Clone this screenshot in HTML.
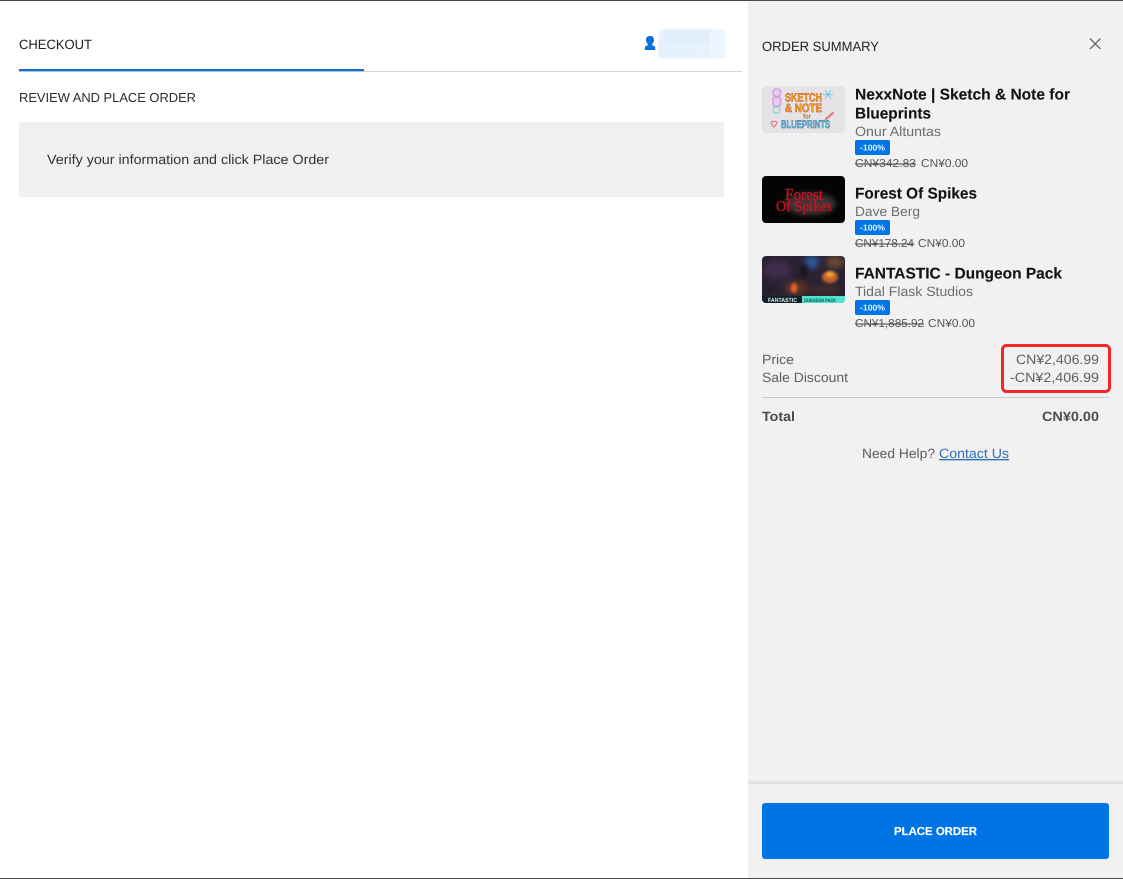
<!DOCTYPE html>
<html lang="en">
<head>
<meta charset="utf-8">
<title>Checkout</title>
<style>
html,body{margin:0;padding:0;background:#fff;width:1123px;height:879px;overflow:hidden}
svg{display:block}
text{font-family:"Liberation Sans",sans-serif;text-rendering:geometricPrecision}
.t{font-size:15.500px;font-weight:700;fill:#121212;stroke:#121212;stroke-width:.12px}
.s{font-size:13.500px;fill:#6c6c6c}
.p{font-size:11.500px;fill:#555}
.l{font-size:13.500px;fill:#5e5e5e}
.b{font-size:8.500px;font-weight:700;fill:#eaf4ff}
</style>
</head>
<body>
<svg xmlns="http://www.w3.org/2000/svg" width="1123" height="879" viewBox="0 0 1123 879">
<defs>
<filter id="b1" x="-30%" y="-30%" width="160%" height="160%"><feGaussianBlur stdDeviation="1.300"/></filter>
<filter id="b2" x="-30%" y="-30%" width="160%" height="160%"><feGaussianBlur stdDeviation="3"/></filter>
<filter id="b4" x="-10%" y="-10%" width="120%" height="120%"><feGaussianBlur stdDeviation=".35"/></filter>
<filter id="b5" x="-10%" y="-20%" width="120%" height="140%"><feGaussianBlur stdDeviation=".8"/></filter>
<clipPath id="c1"><rect x="762" y="86" width="83" height="47" rx="4"/></clipPath>
<clipPath id="c2"><rect x="762" y="176" width="83" height="47" rx="4"/></clipPath>
<clipPath id="c3"><rect x="762" y="256" width="83" height="47" rx="4"/></clipPath>
<linearGradient id="sh" x1="0" y1="0" x2="0" y2="1"><stop offset="0" stop-color="#f1f1f1"/><stop offset="1" stop-color="#dcdcdc"/></linearGradient>
</defs>

<rect width="1123" height="879" fill="#fff"/>
<rect x="748" y="0" width="375" height="879" fill="#f1f1f1"/>

<rect x="0" y="0" width="1123" height="1" fill="#4a4a4a"/>
<rect x="0" y="878" width="1123" height="1" fill="#4a4a4a"/>

<!-- left header -->
<text x="19" y="49" font-size="13.500" fill="#202020" textLength="73" lengthAdjust="spacingAndGlyphs">CHECKOUT</text>
<rect x="364" y="71" width="378" height="1" fill="#d6d6d6"/>
<rect x="19" y="69" width="345" height="2.400" fill="#1a70c8"/>
<text x="19" y="102" font-size="13" fill="#2a2a2a" textLength="177" lengthAdjust="spacingAndGlyphs">REVIEW AND PLACE ORDER</text>

<rect x="19" y="122" width="705" height="75" fill="#f0f0f0"/>
<text x="47" y="164" font-size="13.500" fill="#333" textLength="282" lengthAdjust="spacingAndGlyphs">Verify your information and click Place Order</text>

<!-- user icon + redaction -->
<path d="M650.500 36c2.200 0 3.500 1.700 3.500 3.900 0 1.800-.8 3.100-1.700 4v1.500c1.100.4 2.300.8 2.900 1.600v3h-10.400v-3c.6-.8 1.800-1.200 2.900-1.600v-1.500c-.9-.9-1.700-2.200-1.700-4 0-2.200 1.300-3.900 3.700-3.900z" fill="#0a6fdc"/>
<g filter="url(#b5)">
<rect x="658" y="29" width="68" height="30" rx="8" fill="#e8f2fd"/>
<rect x="664" y="30" width="46" height="13" fill="#e0eefc"/>
<rect x="659" y="43" width="36" height="15" fill="#e5f1fc"/>
<rect x="710" y="30" width="16" height="29" fill="#edf6fe"/>
</g>

<!-- summary header -->
<text x="762" y="51" font-size="13.500" fill="#222" textLength="117" lengthAdjust="spacingAndGlyphs">ORDER SUMMARY</text>
<path d="M1090 38.500l10.500 10.500M1100.500 38.500l-10.500 10.500" stroke="#555" stroke-width="1.200" fill="none"/>

<!-- thumb 1 -->
<g clip-path="url(#c1)">
<rect x="762" y="86" width="83" height="47" fill="#e5e3e5"/>
<g filter="url(#b4)">
<rect x="773" y="89" width="7.500" height="7.500" rx="3" fill="#ecc9f0" stroke="#d39fe0" stroke-width="1.500"/>
<rect x="773" y="97" width="7.500" height="9" rx="2" fill="#ecc9f0" stroke="#d39fe0" stroke-width="1.500"/>
<rect x="773.500" y="107" width="6" height="6" rx="1" fill="none" stroke="#7fd8dc" stroke-width="1.300"/>
<text x="785" y="101.500" font-size="12" font-weight="700" fill="#f0a92f" stroke="#c4562b" stroke-width=".5" textLength="37" lengthAdjust="spacingAndGlyphs">SKETCH</text>
<text x="785" y="112" font-size="12" font-weight="700" fill="#f0a92f" stroke="#c4562b" stroke-width=".5" textLength="37" lengthAdjust="spacingAndGlyphs">&amp; NOTE</text>
<text x="803" y="118.500" font-size="7" font-weight="700" fill="#c8702c" textLength="8" lengthAdjust="spacingAndGlyphs">for</text>
<text x="781" y="128" font-size="11" font-weight="700" fill="#7cc8e2" stroke="#2c6f9a" stroke-width=".5" textLength="49" lengthAdjust="spacingAndGlyphs">BLUEPRINTS</text>
<circle cx="828" cy="94.500" r="1.600" fill="#5cc6e6"/>
<path d="M823 94.500h10M825 90l6 9M831 90l-6 9" stroke="#72cfe9" stroke-width="1"/>
<path d="M826 119l7-6" stroke="#e37f83" stroke-width="2.400" stroke-linecap="round"/>
<path d="M774 127l-2.500-3c-1.500-2 1-4 2.500-2 1.500-2 4 0 2.500 2z" fill="none" stroke="#e77b86" stroke-width="1.200"/>
</g>
</g>

<!-- thumb 2 -->
<g clip-path="url(#c2)">
<rect x="762" y="176" width="83" height="47" fill="#040404"/>
<ellipse cx="810" cy="204" rx="26" ry="11" fill="#3c3636" filter="url(#b2)"/>
<g filter="url(#b4)">
<text x="785" y="200" font-size="17" fill="#d01020" stroke="#d01020" stroke-width=".3" textLength="38" lengthAdjust="spacingAndGlyphs" style="font-family:'Liberation Serif',serif">Forest</text>
<text x="776" y="211" font-size="15" fill="#d01020" stroke="#d01020" stroke-width=".3" textLength="56" lengthAdjust="spacingAndGlyphs" style="font-family:'Liberation Serif',serif">Of Spikes</text>
</g>
</g>

<!-- thumb 3 -->
<g clip-path="url(#c3)">
<rect x="762" y="256" width="83" height="47" fill="#2a2232"/>
<g filter="url(#b2)">
<ellipse cx="812" cy="262" rx="7" ry="7" fill="#2d5796"/>
<ellipse cx="777" cy="270" rx="14" ry="9" fill="#3f2c4c"/>
<ellipse cx="796" cy="288" rx="12" ry="7" fill="#5a3324"/>
<ellipse cx="835" cy="262" rx="9" ry="6" fill="#6a4a36"/>
<ellipse cx="825" cy="290" rx="14" ry="6" fill="#3d2a2a"/>
</g>
<g filter="url(#b1)">
<ellipse cx="830" cy="277" rx="8" ry="6" fill="#c4622a"/>
<ellipse cx="830" cy="274" rx="4" ry="3" fill="#eea23a"/>
<ellipse cx="794" cy="288" rx="3.500" ry="5" fill="#d8602a"/>
<ellipse cx="804" cy="272" rx="4" ry="7" fill="#1e1822"/>
<ellipse cx="769" cy="290" rx="5" ry="4" fill="#241c2a"/>
</g>
<rect x="762" y="296" width="40" height="7" fill="#10202c"/>
<rect x="802" y="296" width="43" height="7" fill="#4fe3cf"/>
<text x="768" y="302" font-size="6" font-weight="700" fill="#dfe8e8" textLength="29" lengthAdjust="spacingAndGlyphs">FANTASTIC</text>
<text x="804" y="302" font-size="5" font-weight="700" fill="#0d5550" textLength="32" lengthAdjust="spacingAndGlyphs">DUNGEON PACK</text>
</g>

<!-- item 1 -->
<text class="t" x="855" y="99.500" textLength="215" lengthAdjust="spacingAndGlyphs">NexxNote | Sketch &amp; Note for</text>
<text class="t" x="855" y="118.500" textLength="76" lengthAdjust="spacingAndGlyphs">Blueprints</text>
<text class="s" x="855" y="136" textLength="86" lengthAdjust="spacingAndGlyphs">Onur Altuntas</text>
<rect x="855" y="140" width="35" height="15" rx="2" fill="#0074e4"/>
<text class="b" x="860" y="150.500" textLength="25" lengthAdjust="spacingAndGlyphs">-100%</text>
<text class="p" x="855" y="167" text-decoration="line-through" textLength="61" lengthAdjust="spacingAndGlyphs">CN¥342.83</text>
<text class="p" x="921" y="167" textLength="47" lengthAdjust="spacingAndGlyphs">CN¥0.00</text>

<!-- item 2 -->
<text class="t" x="855" y="198.500" textLength="122" lengthAdjust="spacingAndGlyphs">Forest Of Spikes</text>
<text class="s" x="855" y="216" textLength="65" lengthAdjust="spacingAndGlyphs">Dave Berg</text>
<rect x="855" y="220" width="35" height="15" rx="2" fill="#0074e4"/>
<text class="b" x="860" y="230.500" textLength="25" lengthAdjust="spacingAndGlyphs">-100%</text>
<text class="p" x="855" y="247" text-decoration="line-through" textLength="59" lengthAdjust="spacingAndGlyphs">CN¥178.24</text>
<text class="p" x="918" y="247" textLength="47" lengthAdjust="spacingAndGlyphs">CN¥0.00</text>

<!-- item 3 -->
<text class="t" x="855" y="278.500" textLength="207" lengthAdjust="spacingAndGlyphs">FANTASTIC - Dungeon Pack</text>
<text class="s" x="855" y="296" textLength="118" lengthAdjust="spacingAndGlyphs">Tidal Flask Studios</text>
<rect x="855" y="300" width="35" height="15" rx="2" fill="#0074e4"/>
<text class="b" x="860" y="310.500" textLength="25" lengthAdjust="spacingAndGlyphs">-100%</text>
<text class="p" x="855" y="327" text-decoration="line-through" textLength="69" lengthAdjust="spacingAndGlyphs">CN¥1,885.92</text>
<text class="p" x="928" y="327" textLength="47" lengthAdjust="spacingAndGlyphs">CN¥0.00</text>

<!-- totals -->
<text class="l" x="762" y="364" textLength="32" lengthAdjust="spacingAndGlyphs">Price</text>
<text class="l" x="762" y="382" textLength="86" lengthAdjust="spacingAndGlyphs">Sale Discount</text>
<text class="l" x="1016" y="364" textLength="83" lengthAdjust="spacingAndGlyphs">CN¥2,406.99</text>
<text class="l" x="1010" y="382" textLength="89" lengthAdjust="spacingAndGlyphs">-CN¥2,406.99</text>
<rect x="1002.500" y="345.500" width="107" height="46" rx="4" fill="none" stroke="#f0282a" stroke-width="3"/>
<rect x="762" y="397" width="347" height="1" fill="#c9c9c9"/>
<text x="762" y="421" font-size="13.500" font-weight="700" fill="#4c4c4c" textLength="33" lengthAdjust="spacingAndGlyphs">Total</text>
<text x="1042" y="421" font-size="13.500" font-weight="700" fill="#4c4c4c" textLength="57" lengthAdjust="spacingAndGlyphs">CN¥0.00</text>
<text class="l" x="862" y="458" textLength="73" lengthAdjust="spacingAndGlyphs">Need Help?</text>
<text x="939" y="458" font-size="13.500" fill="#2f6fb2" text-decoration="underline" textLength="70" lengthAdjust="spacingAndGlyphs">Contact Us</text>

<!-- footer -->
<rect x="748" y="779" width="375" height="5" fill="url(#sh)"/>
<rect x="762" y="803" width="347" height="56" rx="3" fill="#0074e4"/>
<text x="894" y="835" font-size="11.500" font-weight="700" fill="#fff" stroke="#fff" stroke-width=".15" textLength="83" lengthAdjust="spacingAndGlyphs">PLACE ORDER</text>
</svg>
</body>
</html>
